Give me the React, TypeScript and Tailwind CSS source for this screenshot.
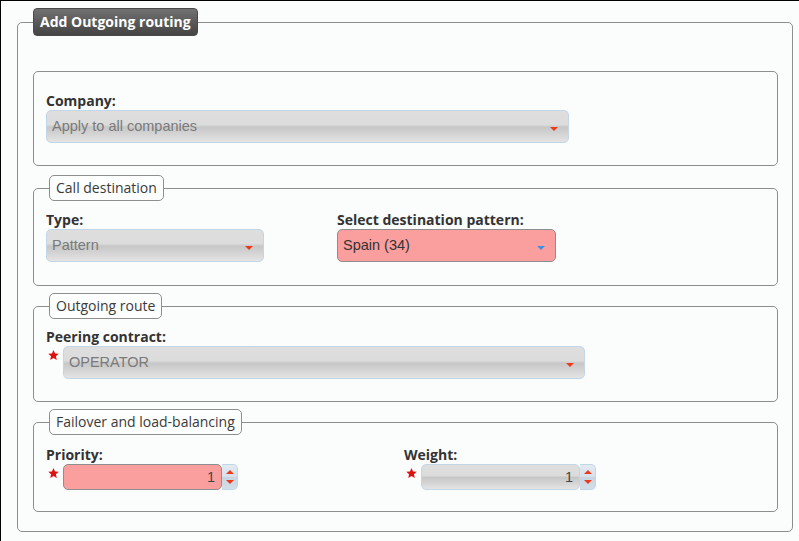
import React from "react";

const Arrow = ({ color }: { color: string }) => (
  <svg width="8" height="4" viewBox="0 0 8 4" className="mt-[4px] shrink-0">
    <path d="M0 0H8L4 4Z" fill={color} />
  </svg>
);

const Star = () => (
  <svg width="11" height="10" viewBox="1 0.5 22 21" className="shrink-0">
    <path
      d="M12 0.5l3.2 7.2 7.8 0.7-5.9 5.2 1.8 7.7L12 17.3l-6.9 4 1.8-7.7L1 8.4l7.8-0.7z"
      fill="#e01010"
    />
  </svg>
);

const grayGrad =
  "bg-[linear-gradient(180deg,#dedede_0%,#dcdcdc_44%,#c7c7c7_52%,#d6d6d6_78%,#e4e4e4_100%)] border-[#c3d6e7]";
const pinkFill = "bg-[#fa9e9e] border-[#8e8e8e]";

function Select({
  text,
  className,
  pink,
}: {
  text: string;
  className: string;
  pink?: boolean;
}) {
  return (
    <div
      className={`flex h-[33px] items-center justify-between rounded-[5px] border pl-[5px] pr-[10px] ${
        pink ? pinkFill : grayGrad
      } ${className}`}
    >
      <span
        className={`font-['Liberation_Sans',Arial,sans-serif] text-[14.5px] leading-none ${
          pink ? "text-[#333333]" : "text-[#7a7a7a]"
        }`}
      >
        {text}
      </span>
      <Arrow color={pink ? "#3d8ee6" : "#ee3a1c"} />
    </div>
  );
}

function Spin({ pink }: { pink?: boolean }) {
  return (
    <div className="flex items-center">
      <div
        className={`flex h-[26px] w-[159px] items-center justify-end rounded-[5px] border pr-[6px] ${
          pink ? pinkFill : grayGrad
        }`}
      >
        <span className="font-['Liberation_Sans',Arial,sans-serif] text-[14.5px] leading-none text-[#444444]">
          1
        </span>
      </div>
      <div className="flex h-[26px] w-[16px] flex-col items-center justify-around rounded-r-[5px] border border-l-0 border-[#c3d6e7] bg-[linear-gradient(180deg,#e3ebf2_0%,#d5e0ea_50%,#c8d5e1_50%,#d2dde7_100%)] py-[2px]">
        <svg width="8" height="4" viewBox="0 0 8 4">
          <path d="M0 4H8L4 0Z" fill="#ee3a1c" />
        </svg>
        <svg width="8" height="4" viewBox="0 0 8 4">
          <path d="M0 0H8L4 4Z" fill="#ee3a1c" />
        </svg>
      </div>
    </div>
  );
}

const Label = ({ children }: { children: React.ReactNode }) => (
  <div className="font-['Open_Sans',sans-serif] text-[14px] font-bold leading-[19px] text-[#333333]">
    {children}
  </div>
);

const Legend = ({ children }: { children: React.ReactNode }) => (
  <legend className="ml-[3px] rounded-[5px] border border-[#8e8e8e] bg-[#fdfefe] px-[6px] font-['Open_Sans',sans-serif] text-[14px] leading-[24px] text-[#3a3a3a]">
    {children}
  </legend>
);

export default function App() {
  return (
    <div className="h-[541px] w-[799px] overflow-hidden border-l border-t border-black bg-[#fbfcfc]">
      <fieldset className="ml-[16px] mt-[7px] w-[776px] rounded-[5px] border border-[#8e8e8e] pb-[19px] pl-[15px] pr-[14px] pt-[35px]">
        <legend className="rounded-[4px] border border-[#4a4a4a] bg-[linear-gradient(180deg,#727272_0%,#5a5a5a_50%,#444444_100%)] px-[6px] font-['Open_Sans',sans-serif] text-[14px] font-bold leading-[26px] text-white">
          Add Outgoing routing
        </legend>

        <fieldset className="rounded-[5px] border border-[#8e8e8e] px-[12px] pb-[22px] pt-[19px]">
          <Label>Company:</Label>
          <Select text="Apply to all companies" className="w-[523px]" />
        </fieldset>

        <fieldset className="mt-[9px] rounded-[5px] border border-[#8e8e8e] px-[12px] pb-[23px] pt-[9px]">
          <Legend>Call destination</Legend>
          <div className="flex">
            <div className="w-[291px]">
              <Label>Type:</Label>
              <Select text="Pattern" className="w-[218px]" />
            </div>
            <div>
              <Label>Select destination pattern:</Label>
              <Select text="Spain (34)" className="w-[219px]" pink />
            </div>
          </div>
        </fieldset>

        <fieldset className="mt-[7px] rounded-[5px] border border-[#8e8e8e] px-[12px] pb-[22px] pt-[8px]">
          <Legend>Outgoing route</Legend>
          <Label>Peering contract:</Label>
          <div className="flex items-start gap-[4px] pl-[2px]">
            <div className="pt-[4px]">
              <Star />
            </div>
            <Select text="OPERATOR" className="w-[522px]" />
          </div>
        </fieldset>

        <fieldset className="mt-[7px] rounded-[5px] border border-[#8e8e8e] px-[12px] pb-[21px] pt-[10px]">
          <Legend>Failover and load-balancing</Legend>
          <div className="flex">
            <div className="w-[358px]">
              <Label>Priority:</Label>
              <div className="flex items-start gap-[4px] pl-[2px]">
                <div className="pt-[4px]">
                  <Star />
                </div>
                <Spin pink />
              </div>
            </div>
            <div>
              <Label>Weight:</Label>
              <div className="flex items-start gap-[4px] pl-[2px]">
                <div className="pt-[4px]">
                  <Star />
                </div>
                <Spin />
              </div>
            </div>
          </div>
        </fieldset>
      </fieldset>
    </div>
  );
}
